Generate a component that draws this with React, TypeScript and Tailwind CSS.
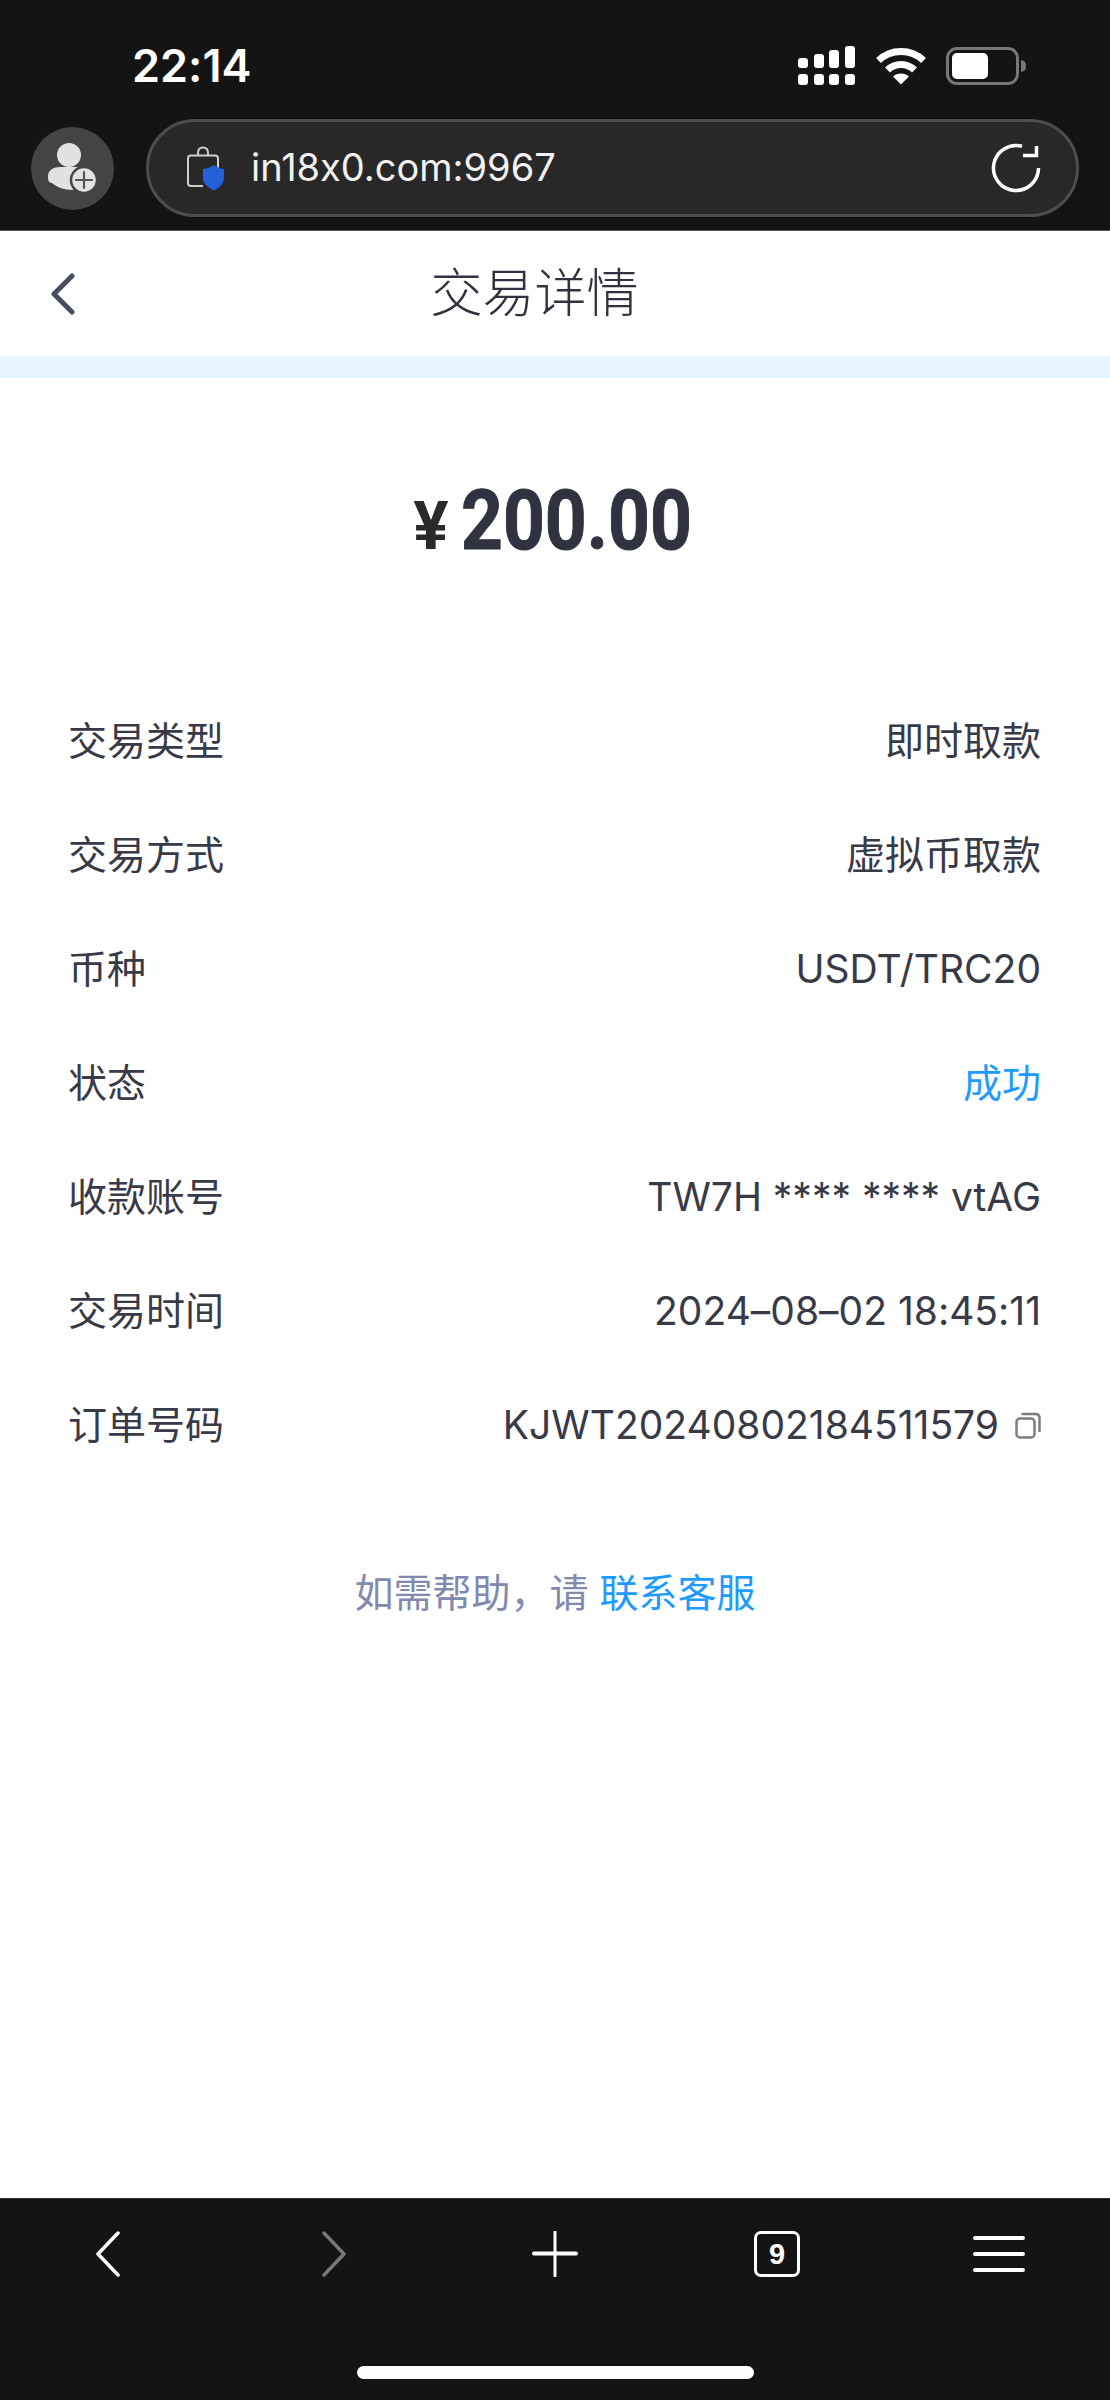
import React from "react";

const rows: [string, string, string?][] = [
  ["交易类型", "即时取款"],
  ["交易方式", "虚拟币取款"],
  ["币种", "USDT/TRC20"],
  ["状态", "成功", "text-[#1e9bff]"],
  ["收款账号", "TW7H **** **** vtAG"],
  ["交易时间", "2024–08–02 18:45:11"],
];

function Signal() {
  return (
    <svg width="58" height="40" viewBox="0 0 58 40" fill="#fff">
      <rect x="0" y="12" width="10" height="10" rx="3" />
      <rect x="16" y="8" width="10" height="14" rx="3" />
      <rect x="31" y="4" width="10" height="18" rx="3" />
      <rect x="47" y="0" width="10" height="22" rx="3" />
      <rect x="0" y="28" width="10" height="11" rx="3" />
      <rect x="16" y="28" width="10" height="11" rx="3" />
      <rect x="31" y="28" width="10" height="11" rx="3" />
      <rect x="47" y="28" width="10" height="11" rx="3" />
    </svg>
  );
}

function Wifi() {
  return (
    <svg width="50" height="38" viewBox="0 0 50 38" fill="none" stroke="#fff" strokeWidth="7">
      <path d="M2.500 13.500C15 1.500 35 1.500 47.500 13.500" />
      <path d="M11.500 23C19 15.500 31 15.500 38.500 23" />
      <path d="M25 37.500L17 29.500C21 25.500 29 25.500 33 29.500Z" fill="#fff" stroke="none" />
    </svg>
  );
}

function Battery() {
  return (
    <div className="flex items-center">
      <div className="w-[73px] h-[38px] rounded-[11px] border-[3px] border-[#777] p-[3px] bg-transparent">
        <div className="w-[36px] h-full rounded-[5px] bg-white" />
      </div>
      <div className="ml-[2px] w-[5px] h-[12px] rounded-r-full bg-[#777]" />
    </div>
  );
}

function Person() {
  return (
    <svg width="50" height="50" viewBox="0 0 50 50">
      <circle cx="21" cy="12" r="12" fill="#e2e2e2" />
      <path d="M4 40C0 40 0 36 0 33C0 27 6 24 12 24H30C36 24 39 26 41 28C32 30 25 36 25 47C15 47 9 44 4 40Z" fill="#e2e2e2" />
      <circle cx="36" cy="37" r="13" fill="#e2e2e2" stroke="#444" strokeWidth="2.500" />
      <path d="M36 29V45M28 37H44" stroke="#555" strokeWidth="2.200" strokeLinecap="round" />
    </svg>
  );
}

function LockShield() {
  return (
    <svg width="38" height="45" viewBox="0 0 38 45" fill="none">
      <path d="M11 9V7C11 3.500 13 1.500 16 1.500C19 1.500 21 3.500 21 7V9" stroke="#cfcfcf" strokeWidth="2" />
      <path d="M4 9.500H28C30 9.500 31 10.500 31 12.500V22M16 40H4C2 40 1 39 1 37V12.500C1 10.500 2 9.500 4 9.500" stroke="#cfcfcf" strokeWidth="2" />
      <path d="M27 19C30 21.500 33 22.500 37 23V32C37 38 32 42 27 44.500C22 42 16 38 16 32V23C20 22.500 24 21.500 27 19Z" fill="#2460d8" />
    </svg>
  );
}

function Refresh() {
  return (
    <svg width="50" height="50" viewBox="0 0 50 50" fill="none" stroke="#fff" strokeWidth="3.500">
      <path d="M47.500 25A22.500 22.500 0 1 1 31 3.300" />
      <path d="M32 12.500H45.500V3" />
    </svg>
  );
}

function CopyIcon() {
  return (
    <svg width="26" height="27" viewBox="0 0 26 27" fill="none" stroke="#807e7a" strokeWidth="2.500" className="ml-[16px] shrink-0">
      <rect x="1.500" y="6.500" width="18" height="19" rx="3.500" />
      <path d="M6.500 2H20.500C23 2 24.500 3.500 24.500 6V20" />
    </svg>
  );
}

export default function App() {
  return (
    <div className="w-[1110px] h-[2400px] flex flex-col bg-white font-['Inter','Noto_Sans_CJK_SC',sans-serif] text-[#383a48] [font-feature-settings:'calt'_0]">
      <div className="h-[231px] shrink-0 bg-[#141414] border-b border-[#555] flex flex-col">
        <div className="h-[119px] shrink-0 flex items-start pl-[132px] pr-[84px] pt-[44px] justify-between">
          <span className="text-[45px] leading-[44px] font-semibold text-white">22:14</span>
          <div className="flex items-center gap-[20px] pt-[2px]">
            <Signal />
            <Wifi />
            <Battery />
          </div>
        </div>
        <div className="flex items-center pl-[31px] pr-[31px]">
          <div className="w-[83px] h-[83px] rounded-full bg-[#444] flex items-center justify-center shrink-0">
            <Person />
          </div>
          <div className="ml-[32px] flex-1 h-[98px] rounded-[49px] bg-[#282828] border-[3px] border-[#4d4d4d] flex items-center pl-[38px] pr-[35px]">
            <LockShield />
            <span className="ml-[26px] flex-1 text-[38px] text-[#f2f2f2] leading-none -mt-[3px]">in18x0.com:9967</span>
            <Refresh />
          </div>
        </div>
      </div>

      <div className="h-[125px] shrink-0 flex items-center pl-[50px]">
        <svg width="26" height="42" viewBox="0 0 26 42" fill="none" stroke="#474e5f" strokeWidth="5" strokeLinecap="round" strokeLinejoin="round" className="shrink-0">
          <path d="M22 3L4 21L22 39" />
        </svg>
        <div className="flex-1 text-center text-[52px] font-light leading-none text-[#30323f] pr-[117px]">交易详情</div>
      </div>
      <div className="h-[22px] shrink-0 bg-[#e6f4fe]" />

      <div className="h-[306px] shrink-0 flex items-start justify-center pt-[103px] pr-[6px] font-['Roboto',sans-serif]">
        <span className="text-[66px] leading-[80px] font-bold text-[#2a2a2a] mt-[6px]">¥</span>
        <span className="ml-[12px] w-[230px] origin-left scale-x-[0.87] whitespace-nowrap text-[84px] leading-[80px] font-bold text-[#30323f] [-webkit-text-stroke:1px_#30323f]">200.00</span>
      </div>

      <div className="pl-[68px] pr-[69px] flex flex-col text-[39px]">
        {rows.map(([k, v, c]) => (
          <div key={k} className="h-[114px] flex items-center justify-between">
            <span>{k}</span>
            <span className={c ?? ""}>{v}</span>
          </div>
        ))}
        <div className="h-[114px] flex items-center justify-between">
          <span>订单号码</span>
          <span className="flex items-center">
            KJWT20240802184511579
            <CopyIcon />
          </span>
        </div>
      </div>

      <div className="mt-[86px] text-center text-[39px] leading-[50px] text-[#8189ae]">
        如需帮助，请 <span className="text-[#1e9bff]">联系客服</span>
      </div>

      <div className="flex-1" />

      <div className="h-[202px] shrink-0 bg-[#141414] border-t border-[#333] flex flex-col">
        <div className="grid grid-cols-5 pt-[32px] h-[167px] shrink-0 items-start">
          <div className="flex justify-center pr-[6px]">
            <svg width="26" height="46" viewBox="0 0 26 46" fill="none" stroke="#fff" strokeWidth="3.500" strokeLinecap="round" strokeLinejoin="round">
              <path d="M23 2L3 23L23 44" />
            </svg>
          </div>
          <div className="flex justify-center pl-[2px]">
            <svg width="26" height="46" viewBox="0 0 26 46" fill="none" stroke="#777" strokeWidth="3.500" strokeLinecap="round" strokeLinejoin="round">
              <path d="M3 2L23 23L3 44" />
            </svg>
          </div>
          <div className="flex justify-center">
            <svg width="46" height="46" viewBox="0 0 46 46" fill="none" stroke="#fff" strokeLinecap="round">
              <path d="M23 1V45" strokeWidth="3" />
              <path d="M2 22.500H44" strokeWidth="4" />
            </svg>
          </div>
          <div className="flex justify-center">
            <div className="w-[46px] h-[46px] rounded-[7px] border-[3px] border-white flex items-center justify-center text-white text-[29px] font-bold leading-none font-['Liberation_Sans',sans-serif]">9</div>
          </div>
          <div className="flex justify-center">
            <div className="w-[52px] h-[46px] flex flex-col justify-between py-[5px]">
              <div className="h-[4px] bg-white rounded-full" />
              <div className="h-[4px] bg-white rounded-full" />
              <div className="h-[4px] bg-white rounded-full" />
            </div>
          </div>
        </div>
        <div className="flex justify-center">
          <div className="w-[397px] h-[13px] rounded-full bg-white" />
        </div>
      </div>
    </div>
  );
}
